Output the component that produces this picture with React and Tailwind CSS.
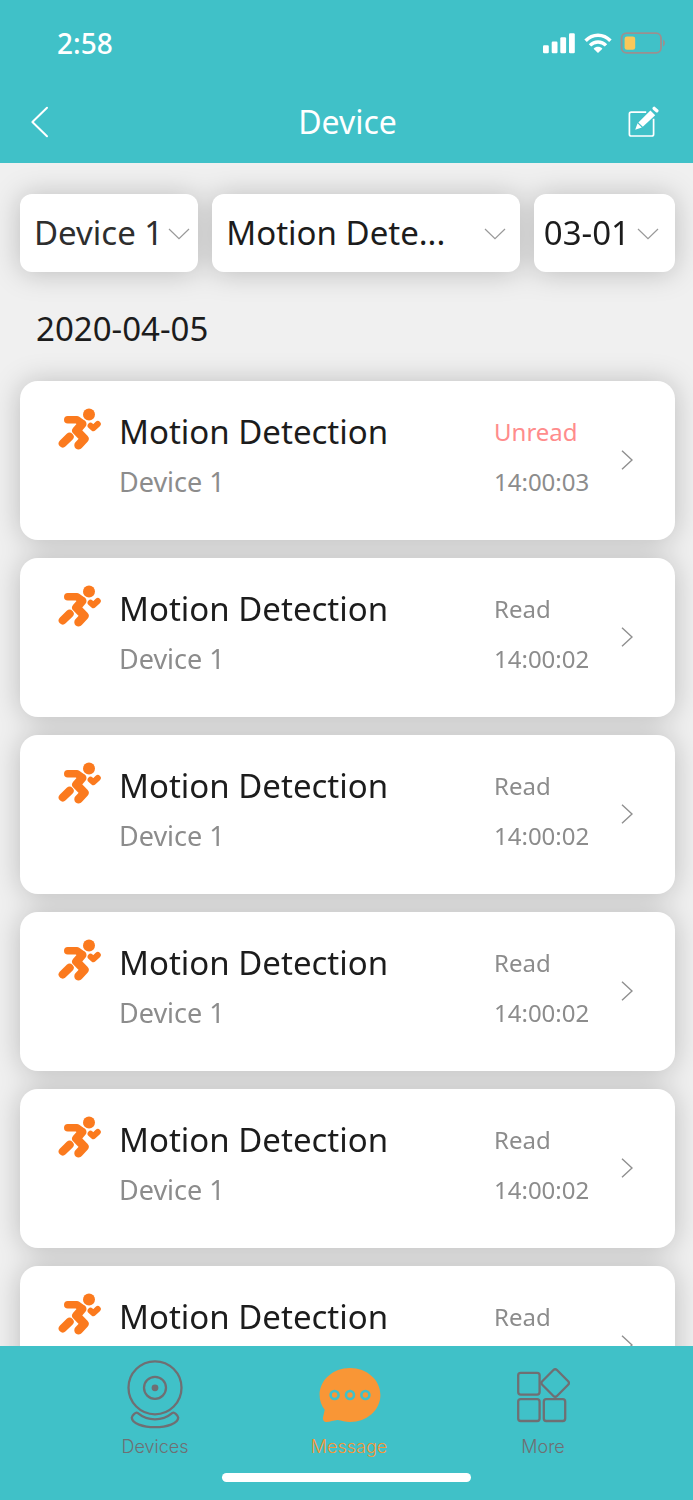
import React from "react";

const messages = [
  { id: 1, status: "Unread", time: "14:00:03" },
  { id: 2, status: "Read", time: "14:00:02" },
  { id: 3, status: "Read", time: "14:00:02" },
  { id: 4, status: "Read", time: "14:00:02" },
  { id: 5, status: "Read", time: "14:00:02" },
  { id: 6, status: "Read", time: "14:00:02" },
];

function SignalIcon() {
  return (
    <svg width="33" height="21" viewBox="0 0 33 21" fill="#fff" aria-hidden="true">
      <rect x="0" y="12.3" width="5.8" height="8" rx="1.2" />
      <rect x="8.7" y="8.6" width="5.8" height="11.7" rx="1.2" />
      <rect x="17.3" y="4.3" width="5.8" height="16" rx="1.2" />
      <rect x="26" y="0.3" width="5.8" height="20" rx="1.2" />
    </svg>
  );
}

function WifiIcon() {
  return (
    <svg width="28" height="21" viewBox="0 0 28 21" fill="none" aria-hidden="true">
      <path d="M1.6 7.8C8.6 0.5 19.4 0.5 26.4 7.8" stroke="#fff" strokeWidth="3.5" />
      <path d="M6 12.4C10.6 7.9 17.4 7.9 22 12.4" stroke="#fff" strokeWidth="3.4" />
      <path d="M9.6 15.8C12 13.2 16 13.2 18.4 15.8L14 20Z" fill="#fff" />
    </svg>
  );
}

function BatteryIcon() {
  return (
    <svg width="45" height="22" viewBox="0 0 45 22" fill="none" aria-hidden="true">
      <rect x="1.6" y="1.1" width="39.4" height="19.8" rx="5" stroke="#9a9090" strokeWidth="1.9" />
      <path d="M43 7.6C45.6 8.8 45.6 13.2 43 14.4Z" fill="#9a9090" />
      <rect x="4.6" y="4.4" width="10.6" height="13.4" rx="2.4" fill="#fbc859" />
    </svg>
  );
}

function EditIcon() {
  return (
    <svg width="31" height="32" viewBox="0 0 31 32" fill="none" aria-hidden="true">
      <path
        d="M18.2 6.2H3.2Q1.4 6.2 1.4 8V28.2Q1.4 30 3.2 30H23.8Q25.6 30 25.6 28.2V12.8"
        stroke="#fff"
        strokeWidth="1.7"
      />
      <path d="M22.4 4.6L27.2 9.2L14.8 20.8L10.4 16.4Z" fill="#fff" />
      <path d="M9.6 17.3L13.8 21.5L7.2 23.7Z" fill="#fff" />
      <path d="M26.2 2.4L28.8 4.8" stroke="#fff" strokeWidth="3.4" strokeLinecap="round" />
    </svg>
  );
}

function RunnerIcon() {
  return (
    <svg
      width="43"
      height="42"
      viewBox="0 0 43 42"
      fill="none"
      stroke="#fb7a1e"
      strokeLinecap="round"
      strokeLinejoin="round"
      aria-hidden="true"
    >
      <circle cx="31" cy="6.6" r="6" fill="#fb7a1e" stroke="none" />
      <path d="M9.8 11.7H19L23.5 15" strokeWidth="7.6" />
      <path d="M24.2 16L18.4 22.6L26.4 30.8L20.6 37.2" strokeWidth="8.6" />
      <path d="M4.8 35.4L11.6 28.8" strokeWidth="8.2" />
      <path d="M32.6 17.8L35.4 20.2L39.8 16" strokeWidth="6" />
    </svg>
  );
}

function ChevronRight() {
  return (
    <svg width="12" height="20" viewBox="0 0 12 20" fill="none" aria-hidden="true">
      <path d="M1 0.8L11 10L1 19.2" stroke="#8f8f8f" strokeWidth="1.4" />
    </svg>
  );
}

function CameraIcon() {
  return (
    <svg width="58" height="70" viewBox="0 0 58 70" fill="none" stroke="#6f6f73" strokeWidth="2.3" aria-hidden="true">
      <circle cx="29" cy="27.8" r="26.5" />
      <circle cx="29" cy="27.8" r="11" />
      <circle cx="29" cy="27.8" r="3.4" fill="#6f6f73" stroke="none" />
      <path
        d="M11.5 52.9C22 61.6 36 61.6 46.5 52.9C48.4 51.8 52 55.6 52.2 57.6C52 63.4 41 67.2 29 67.2C17 67.2 6 63.4 5.8 57.6C6 55.6 9.6 51.8 11.5 52.9Z"
        strokeLinejoin="round"
      />
    </svg>
  );
}

function MessageIcon() {
  return (
    <svg width="64" height="70" viewBox="-2 0 64 70" fill="none" aria-hidden="true">
      <path
        d="M31 8C48 8 61.4 20 61.4 35C61.4 50 48 62 31 62C26.6 62 22.5 60.7 18.5 60.1C14.5 60.5 11 62 7.6 62C4.6 61.8 3.6 59.6 4 57.4L5.7 49.7C2.3 45.6 0.6 40.5 0.6 35C0.6 20 14 8 31 8Z"
        fill="#f99636"
      />
      <g stroke="#40c1c8" strokeWidth="2.6">
        <circle cx="15.6" cy="35" r="4" />
        <circle cx="31" cy="35" r="4" />
        <circle cx="46.4" cy="35" r="4" />
      </g>
    </svg>
  );
}

function MoreIcon() {
  return (
    <svg width="54" height="70" viewBox="0 0 54 70" fill="none" stroke="#6f6f73" strokeWidth="2.3" strokeLinejoin="round" aria-hidden="true">
      <rect x="2.2" y="12.8" width="21.4" height="21.8" rx="2.5" />
      <rect x="2.2" y="39.2" width="21.4" height="21.8" rx="2.5" />
      <rect x="27.8" y="39.2" width="21.4" height="21.8" rx="2.5" />
      <rect x="28.8" y="12.6" width="20.8" height="20.8" rx="2.5" transform="rotate(45 39.2 23)" />
    </svg>
  );
}

function Filter({ id, label, value, className, chevronClass }) {
  return (
    <div className="relative">
      <label htmlFor={id} className="sr-only">
        {label}
      </label>
      <select
        id={id}
        className={
          "h-[78px] w-full appearance-none rounded-xl bg-white text-[33px] leading-[48px] outline-none " + className
        }
      >
        <option>{value}</option>
      </select>
      <svg
        className={"pointer-events-none absolute top-[34px] " + chevronClass}
        width="22"
        height="12"
        viewBox="0 0 22 12"
        fill="none"
        aria-hidden="true"
      >
        <path d="M1 1L11 10.6L21 1" stroke="#999" strokeWidth="1.2" />
      </svg>
    </div>
  );
}

const tabs = [
  { name: "Devices", Icon: CameraIcon, color: "text-[#6f6f73]" },
  { name: "Message", Icon: MessageIcon, color: "text-[#f99636]" },
  { name: "More", Icon: MoreIcon, color: "text-[#6f6f73]" },
];

export default function App() {
  return (
    <div className="flex h-screen flex-col bg-[#f0f0f0] font-['Noto_Sans','Open_Sans',sans-serif] text-[#1c1c1c]">
      <header className="shrink-0 bg-[#40c1c8] text-white">
        <div className="flex h-[82px] items-center justify-between pt-1 pr-7 pl-[57px]">
          <span className="text-[28px] leading-9 font-medium">2:58</span>
          <div className="flex items-center gap-2">
            <SignalIcon />
            <WifiIcon />
            <BatteryIcon />
          </div>
        </div>
        <div className="grid h-[81px] grid-cols-[1fr_auto_1fr] items-center pr-[34px] pb-0.5 pl-9">
          <button type="button" aria-label="Back" className="-ml-1.5 justify-self-start">
            <svg width="20" height="32" viewBox="0 0 20 32" fill="none" aria-hidden="true">
              <path d="M17 1.8L2.4 16L17 30.2" stroke="#fff" strokeWidth="2" strokeLinecap="round" strokeLinejoin="round" />
            </svg>
          </button>
          <h1 className="text-[32px] leading-10">Device</h1>
          <button type="button" aria-label="Edit" className="justify-self-end">
            <EditIcon />
          </button>
        </div>
      </header>

      <main className="min-h-0 flex-1 overflow-y-auto pt-[31px] pr-[18px] pl-5 [scrollbar-width:none]">
        <div className="grid grid-cols-[178fr_307fr_141fr] gap-[14px] drop-shadow-[0_1px_14px_rgba(0,0,0,0.22)]">
          <Filter id="device" label="Device" value="Device 1" className="pl-[14px] text-[#2e2e2e]" chevronClass="right-2" />
          <Filter id="kind" label="Event type" value="Motion Dete..." className="pl-[14px]" chevronClass="right-[14px]" />
          <Filter id="date" label="Date" value="03-01" className="pl-[10px]" chevronClass="right-4" />
        </div>

        <h2 className="mt-[37px] pl-4 text-[33px] leading-10">2020-04-05</h2>

        <ul className="mt-8 flex flex-col gap-[18px] pb-[18px] drop-shadow-[0_1px_14px_rgba(0,0,0,0.22)]">
          {messages.map((m) => (
            <li key={m.id}>
              <a href="#message" className="flex rounded-[18px] bg-white pt-[31px] pr-[42px] pb-10 pl-[38px]">
                <div className="-mt-1 shrink-0">
                  <RunnerIcon />
                </div>
                <div className="flex min-w-0 flex-1 flex-col gap-3 pl-[18px]">
                  <p className="text-[33px] leading-10">Motion Detection</p>
                  <p className="text-[27px] leading-9 text-[#8c8c8c]">Device 1</p>
                </div>
                <div className="flex w-[127px] shrink-0 flex-col gap-3 text-2xl">
                  <p className={"leading-10 " + (m.status === "Unread" ? "text-[#ff8c8c]" : "text-[#8c8c8c]")}>
                    {m.status}
                  </p>
                  <p className="leading-9 text-[#8c8c8c]">{m.time}</p>
                </div>
                <div className="mt-[38px] shrink-0">
                  <ChevronRight />
                </div>
              </a>
            </li>
          ))}
        </ul>
      </main>

      <nav className="shrink-0 bg-[#40c1c8] pt-[14px] pb-[18px]">
        <ul className="grid grid-cols-3 pr-[53px] pl-[58px]">
          {tabs.map(({ name, Icon, color }) => (
            <li key={name}>
              <a href={"#" + name.toLowerCase()} className={"flex flex-col items-center gap-[5px] " + color}>
                <Icon />
                <span className="font-['Inter',sans-serif] text-lg leading-6 font-light">{name}</span>
              </a>
            </li>
          ))}
        </ul>
        <div className="mx-auto mt-[14px] h-[9px] w-[36%] rounded-full bg-white" />
      </nav>
    </div>
  );
}
